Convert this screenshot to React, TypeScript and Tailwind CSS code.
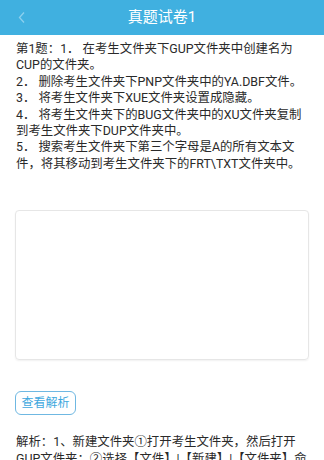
const QUESTION = [
  "第1题：1． 在考生文件夹下GUP文件夹中创建名为CUP的文件夹。",
  "2． 删除考生文件夹下PNP文件夹中的YA.DBF文件。",
  "3． 将考生文件夹下XUE文件夹设置成隐藏。",
  "4． 将考生文件夹下的BUG文件夹中的XU文件夹复制到考生文件夹下DUP文件夹中。",
  "5． 搜索考生文件夹下第三个字母是A的所有文本文件，将其移动到考生文件夹下的FRT\\TXT文件夹中。",
];

export default function App() {
  return (
    <div className="w-[324px] h-[460px] overflow-hidden bg-white font-['Roboto','Noto_Sans_CJK_SC',sans-serif] text-[#2a2a2a]">
      {/* header */}
      <div className="relative flex h-[35px] items-center justify-center bg-[#40b0e0]">
        <svg
          className="absolute left-[17px] top-[11px]"
          width="10"
          height="13"
          viewBox="0 0 10 13"
          fill="none"
        >
          <path d="M7 1.5L2.5 6.5L7 11.5" stroke="#8cd0ee" strokeWidth="1.3" />
        </svg>
        <span className="text-[15px] text-white">真题试卷1</span>
      </div>

      {/* question */}
      <div className="pl-4 pr-3 pt-[6px] text-[12.4px] leading-[16.4px]">
        {QUESTION.map((line, i) => (
          <p key={i}>{line}</p>
        ))}
      </div>

      {/* answer box */}
      <div className="mx-[15px] mt-[38px] h-[150px] rounded-[4px] border border-[#e6e6e6] shadow-[0_1px_2px_rgba(0,0,0,0.06)]" />

      <div className="px-[15px] pt-[31px]">
        <button className="flex h-[24px] w-[61px] items-center justify-center rounded-[6px] border border-[#6fb8e2] text-[12px] text-[#3ea8de]">
          查看解析
        </button>
      </div>

      {/* analysis */}
      <div className="pl-4 pr-3 pt-[19px] text-[12.4px] leading-[16.4px]">
        解析：1、新建文件夹①打开考生文件夹，然后打开GUP文件夹：②选择【文件】|【新建】|【文件夹】命令，即可生成新的文件夹。
      </div>
    </div>
  );
}
